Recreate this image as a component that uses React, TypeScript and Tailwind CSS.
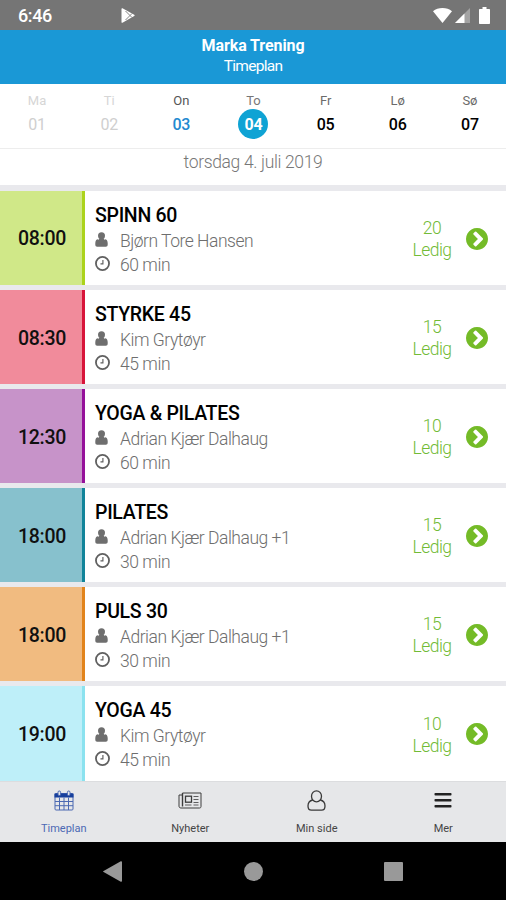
import { ReactNode } from 'react';

interface ClassItem {
    time: string;
    title: string;
    trainer: string;
    duration: string;
    spots: number;
    color: string;
}

const days = [
    { name: 'Ma', date: '01', nameClass: 'text-[#d6d6d6]', dateClass: 'text-[#cfcfcf]' },
    { name: 'Ti', date: '02', nameClass: 'text-[#d6d6d6]', dateClass: 'text-[#cfcfcf]' },
    { name: 'On', date: '03', nameClass: 'text-[#555555]', dateClass: 'font-medium text-[#2389d0]' },
    { name: 'To', date: '04', nameClass: 'text-[#777777]', dateClass: 'font-bold text-white bg-[#0fa3d4]' },
    { name: 'Fr', date: '05', nameClass: 'text-[#6b6b6b]', dateClass: 'font-medium text-black' },
    { name: 'Lø', date: '06', nameClass: 'text-[#6b6b6b]', dateClass: 'font-medium text-black' },
    { name: 'Sø', date: '07', nameClass: 'text-[#6b6b6b]', dateClass: 'font-medium text-black' },
];

const classes: ClassItem[] = [
    { time: '08:00', title: 'SPINN 60', trainer: 'Bjørn Tore Hansen', duration: '60 min', spots: 20, color: 'bg-[#d0e888] border-[#acd31c]' },
    { time: '08:30', title: 'STYRKE 45', trainer: 'Kim Grytøyr', duration: '45 min', spots: 15, color: 'bg-[#f18b9b] border-[#d8143a]' },
    { time: '12:30', title: 'YOGA & PILATES', trainer: 'Adrian Kjær Dalhaug', duration: '60 min', spots: 10, color: 'bg-[#c793c9] border-[#95109a]' },
    { time: '18:00', title: 'PILATES', trainer: 'Adrian Kjær Dalhaug +1', duration: '30 min', spots: 15, color: 'bg-[#87c1cd] border-[#11849a]' },
    { time: '18:00', title: 'PULS 30', trainer: 'Adrian Kjær Dalhaug +1', duration: '30 min', spots: 15, color: 'bg-[#f1bb80] border-[#e2841b]' },
    { time: '19:00', title: 'YOGA 45', trainer: 'Kim Grytøyr', duration: '45 min', spots: 10, color: 'bg-[#beeff9] border-[#8be2ef]' },
];

const UserIcon = () => (
    <svg className="w-[13px] h-[15px]" viewBox="0 0 13 15" fill="#6e6e6e">
        <circle cx="6.5" cy="3.8" r="3.500" />
        <path d="M3 7.300C1.300 7.500.4 8.600.3 11v1.700c0 1.200.7 2 1.900 2h8.600c1.200 0 1.900-.8 1.900-2V11C12.600 8.600 11.700 7.500 10 7.300 9 8.100 7.900 8.400 6.500 8.400S4 8.100 3 7.300z" />
        <path d="M4 6.500h5v3H4z" />
    </svg>
);

const ClockIcon = () => (
    <svg className="w-[15px] h-[15px]" viewBox="0 128 1536 1536" fill="none" stroke="#606060">
        <circle cx="768" cy="896" r="670" strokeWidth="185" />
        <path d="M810 540v400H560" strokeWidth="120" />
    </svg>
);

const ChevronIcon = () => (
    <svg className="w-[22px] h-[22px]" viewBox="0 128 1536 1536" fill="#74bb27">
        <path fillRule="evenodd" d="M717 1395l454-454q19-19 19-45t-19-45L717 397q-19-19-45-19t-45 19L525 499q-19 19-19 45t19 45l307 307-307 307q-19 19-19 45t19 45l102 102q19 19 45 19t45-19zM1536 896q0 209-103 385.500T1153.500 1561 768 1664t-385.500-103T103 1281.500 0 896t103-385.500T382.500 231 768 128t385.500 103T1433 510.500 1536 896z" />
    </svg>
);

const CalendarIcon = () => (
    <svg className="w-5 h-[21px]" viewBox="0 0 20 21" fill="none" stroke="#4b69b2">
        <rect x="1" y="3.500" width="18" height="16.500" rx="1" />
        <path d="M.5 3.500h19v4H.5z" fill="#173f9c" stroke="none" />
        <path d="M5.500 7.500V20M10 7.500V20M14.500 7.500V20M1 11.500h18M1 15.700h18" />
        <rect x="4" y="1" width="2.600" height="4.500" rx="1.300" fill="#e6e7e9" />
        <rect x="13.400" y="1" width="2.600" height="4.500" rx="1.300" fill="#e6e7e9" />
    </svg>
);

const NewsIcon = () => (
    <svg className="w-6 h-[17px]" viewBox="0 0 24 17" fill="none" stroke="#3c3c3c">
        <path d="M4.500 1h18.500v13.500c0 .9-.5 1.500-1.400 1.500H3C1.700 16 1 15.200 1 14V3h3.500" />
        <path d="M4.500 1v13.500" strokeWidth="1.400" />
        <rect x="7.500" y="4.200" width="6" height="6" strokeWidth="1.300" />
        <path d="M15.500 4.500h5M15.500 7.500h5M15.500 10.500h5M7 13h6.500M15.500 13h5" strokeWidth=".8" />
    </svg>
);

const PersonIcon = () => (
    <svg className="w-[19px] h-[21px]" viewBox="0 0 19 21" fill="none" stroke="#3a3a3a" strokeWidth="1.300">
        <ellipse cx="9.500" cy="6.300" rx="5" ry="5.500" />
        <path d="M5.700 10C2.600 10.700 1 12.800 1 16c0 2.600 1.300 4.200 3.400 4.200h10.200c2.100 0 3.400-1.600 3.400-4.200 0-3.200-1.600-5.300-4.700-6" />
    </svg>
);

const MenuIcon = () => (
    <svg className="w-[18px] h-[15px]" viewBox="0 0 18 15" fill="#222">
        <rect x=".5" width="17" height="2.500" rx=".8" />
        <rect x=".5" y="6" width="17" height="2.500" rx=".8" />
        <rect x=".5" y="12" width="17" height="2.500" rx=".8" />
    </svg>
);

const StatusBar = () => (
    <div className="h-[30px] shrink-0 bg-[#757575] flex items-center pl-[18px] pr-4">
        <span className="w-[34px] text-[18px] font-medium text-white leading-none tracking-[-0.4px] pt-0.5">6:46</span>
        <svg className="ml-[68px] w-[15px] h-[15px]" viewBox="0 0 15 15">
            <path d="M1.500.8c0-.5.5-.8 1-.6l11.700 6.500c.6.300.6 1 0 1.400L2.500 14.700c-.5.300-1 0-1-.5z" fill="#fff" />
            <path d="M5.500 3l4.500 4.500L5.500 12M10 7.500l2-2M10 7.500l2 2" stroke="#757575" strokeWidth=".9" fill="none" />
        </svg>
        <div className="ml-auto flex items-center gap-[3px]">
            <svg className="w-[19px] h-[15px]" viewBox="0 0 19 15" fill="#fff">
                <path d="M9.500 15L0 3.200C2.600 1 5.800 0 9.500 0S16.400 1 19 3.200z" />
            </svg>
            <svg className="w-[15px] h-[15px]" viewBox="0 0 15 15">
                <path d="M15 0v15H0z" fill="#a3a3a3" />
                <path d="M9.500 5.500V15H0z" fill="#fff" />
            </svg>
            <svg className="ml-1.5 w-[11px] h-[17px]" viewBox="0 0 11 17" fill="#fff">
                <path d="M3.500 0h4v2H10c.6 0 1 .4 1 1v13c0 .6-.4 1-1 1H1c-.6 0-1-.4-1-1V3c0-.6.400-1 1-1h2.500z" />
            </svg>
        </div>
    </div>
);

const ClassRow = ({ item }: { item: ClassItem }) => (
    <div className="h-[99.1px] shrink-0 border-b-5 border-[#e9e9ed] flex">
        <div className={`w-[85px] border-r-3 flex items-center justify-center text-[19.5px] font-medium tracking-[-0.25px] text-[#101010] pt-0.5 pl-0.5 ${item.color}`}>
            {item.time}
        </div>
        <div className="flex-1 pl-2.5 pt-3">
            <div className="text-[19.5px] leading-[25px] font-medium tracking-[-0.3px] text-black">{item.title}</div>
            <div className="h-6 flex items-center text-[17.5px] font-light tracking-[-0.48px] text-[#6e6e6e]">
                <span className="w-[25px] pb-px"><UserIcon /></span>
                <span className="pt-0.5">{item.trainer}</span>
            </div>
            <div className="h-6 flex items-center text-[17.5px] font-light tracking-[-0.45px] text-[#6e6e6e]">
                <span className="w-[25px] pb-0.5"><ClockIcon /></span>
                <span className="pt-0.5">{item.duration}</span>
            </div>
        </div>
        <div className="w-10 mr-[34px] pt-0.5 flex flex-col justify-center items-center text-[17.5px] leading-[22px] tracking-[-0.5px] text-[#72bb36] font-light">
            <span>{item.spots}</span>
            <span>Ledig</span>
        </div>
        <div className="-ml-5 mr-[18px] pt-px flex items-center">
            <ChevronIcon />
        </div>
    </div>
);

const NavTab = ({ label, icon, active }: { label: string; icon: ReactNode; active?: boolean }) => (
    <div className="flex-1 flex flex-col items-center pt-1.5 pl-px">
        <div className="h-6 flex items-center">{icon}</div>
        <div className={`mt-2.5 text-[11px] leading-[14px] ${active ? 'text-[#4c69b4]' : 'text-[#454545]'}`}>{label}</div>
    </div>
);

export default function App() {
    return (
        <div className="w-[506px] h-[900px] overflow-hidden bg-white flex flex-col font-[Roboto,sans-serif]">
            <StatusBar />

            {/* Header */}
            <div className="h-[54px] shrink-0 bg-[#1a98d6] text-white text-center pt-[5px]">
                <div className="text-base leading-[21px] font-bold tracking-[-0.1px]">Marka Trening</div>
                <div className="text-[15.5px] leading-[21px] tracking-[-0.7px]">Timeplan</div>
            </div>

            {/* Week days */}
            <div className="h-[65px] shrink-0 grid grid-cols-7 border-b border-[#ededed] pt-2 pl-px">
                {days.map((day) => (
                    <div key={day.date} className="flex flex-col items-center">
                        <span className={`text-[13px] leading-[17px] ${day.nameClass}`}>{day.name}</span>
                        <span className={`size-[30px] rounded-full flex items-center justify-center text-base tracking-[-0.2px] pt-0.5 ${day.dateClass}`}>{day.date}</span>
                    </div>
                ))}
            </div>
            <div className="h-[42px] shrink-0 border-b-6 border-[#e9e9ed] text-center text-[17.5px] leading-[26px] font-light tracking-[-0.35px] text-[#777777]">
                torsdag 4. juli 2019
            </div>

            {/* Class list */}
            <div className="h-[590px] shrink-0 overflow-hidden flex flex-col">
                {classes.map((item) => (
                    <ClassRow key={item.title} item={item} />
                ))}
            </div>

            {/* Bottom tabs */}
            <div className="h-[61px] shrink-0 bg-[#e6e7e9] border-t border-[#dcdddf] flex">
                <NavTab label="Timeplan" icon={<CalendarIcon />} active />
                <NavTab label="Nyheter" icon={<NewsIcon />} />
                <NavTab label="Min side" icon={<PersonIcon />} />
                <NavTab label="Mer" icon={<MenuIcon />} />
            </div>

            {/* Android navigation */}
            <div className="h-[58px] shrink-0 bg-black flex items-center justify-between px-[103px]">
                <svg className="w-[19px] h-[21px]" viewBox="0 0 19 21" fill="#999">
                    <path d="M19 1v19c0 .7-.6 1-1.200.700L.6 11.100c-.6-.300-.6-.9 0-1.200L17.800.3c.6-.3 1.200 0 1.200.7z" />
                </svg>
                <div className="size-[19px] rounded-full bg-[#999999]"></div>
                <div className="size-[19px] rounded-[1px] bg-[#999999]"></div>
            </div>
        </div>
    );
}
